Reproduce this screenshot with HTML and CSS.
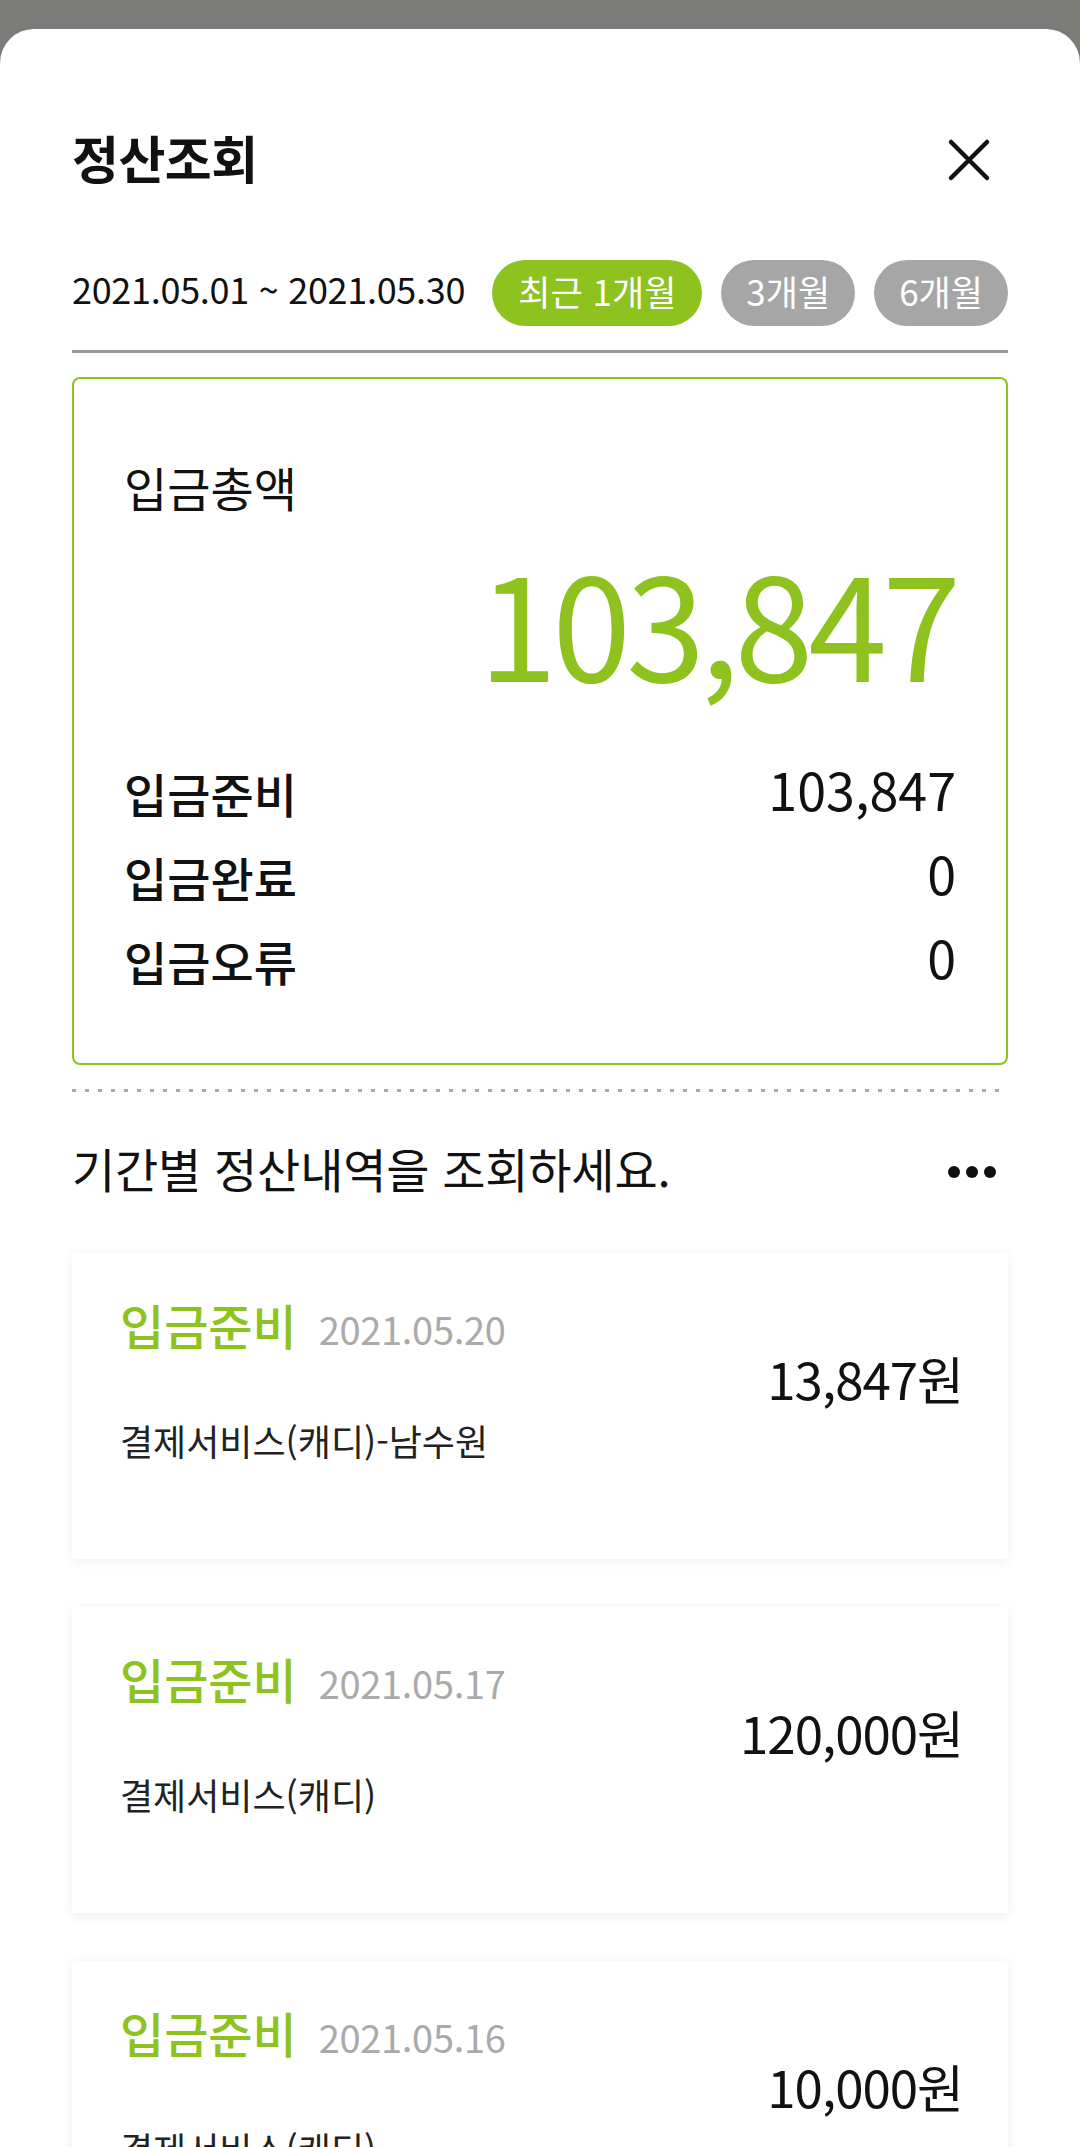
FILE: index.html
```html
<!DOCTYPE html>
<html lang="ko">
<head>
<meta charset="utf-8">
<title>정산조회</title>
<link rel="stylesheet" href="styles.css">
</head>
<body>
<div class="sheet">
  <header class="header">
    <h1 class="title">정산조회</h1>
    <svg class="close" width="44" height="44" viewBox="0 0 44 44" aria-label="닫기">
      <path d="M4 4 L40 40 M40 4 L4 40" stroke="#111" stroke-width="4.5" stroke-linecap="round" fill="none"/>
    </svg>
  </header>

  <div class="period">
    <span class="period-date">2021.05.01 ~ 2021.05.30</span>
    <div class="pills">
      <span class="pill pill-active">최근 1개월</span>
      <span class="pill">3개월</span>
      <span class="pill">6개월</span>
    </div>
  </div>
  <div class="rule"></div>

  <section class="summary">
    <div class="summary-label">입금총액</div>
    <div class="summary-total">103,847</div>
    <div class="summary-rows">
      <div class="summary-row"><span class="row-label">입금준비</span><span class="row-value">103,847</span></div>
      <div class="summary-row"><span class="row-label">입금완료</span><span class="row-value">0</span></div>
      <div class="summary-row"><span class="row-label">입금오류</span><span class="row-value">0</span></div>
    </div>
  </section>

  <div class="dotted"></div>

  <div class="list-head">
    <span class="list-title">기간별 정산내역을 조회하세요.</span>
    <svg class="more" width="48" height="12" viewBox="0 0 48 12" aria-label="더보기">
      <circle cx="6" cy="6" r="6" fill="#111"/>
      <circle cx="24" cy="6" r="6" fill="#111"/>
      <circle cx="42" cy="6" r="6" fill="#111"/>
    </svg>
  </div>

  <div class="cards">
    <article class="card">
      <div class="card-main">
        <div class="card-top"><span class="card-status">입금준비</span><span class="card-date">2021.05.20</span></div>
        <div class="card-desc">결제서비스(캐디)-남수원</div>
      </div>
      <div class="card-amount">13,847원</div>
    </article>
    <article class="card">
      <div class="card-main">
        <div class="card-top"><span class="card-status">입금준비</span><span class="card-date">2021.05.17</span></div>
        <div class="card-desc">결제서비스(캐디)</div>
      </div>
      <div class="card-amount">120,000원</div>
    </article>
    <article class="card">
      <div class="card-main">
        <div class="card-top"><span class="card-status">입금준비</span><span class="card-date">2021.05.16</span></div>
        <div class="card-desc">결제서비스(캐디)</div>
      </div>
      <div class="card-amount">10,000원</div>
    </article>
  </div>
</div>
</body>
</html>
```
FILE: styles.css
```css
* { box-sizing: border-box; }

html, body {
  margin: 0;
  padding: 0;
}

body {
  background: #7b7b79;
  font-family: "Noto Sans CJK KR", "Noto Sans", sans-serif;
  color: #111;
  overflow: hidden;
}

.sheet {
  margin-top: 29px;
  background: #fff;
  border-radius: 34px 34px 0 0;
  padding: 96px 72px 40px;
  min-height: 2118px;
}

.header {
  display: flex;
  align-items: center;
  justify-content: space-between;
  height: 64px;
}

.title {
  margin: 0;
  font-size: 51px;
  line-height: 64px;
  font-weight: 700;
  letter-spacing: -0.5px;
}

.close {
  margin-top: 6px;
  margin-right: 17px;
}

.period {
  display: flex;
  align-items: center;
  margin-top: 71px;
  height: 66px;
}

.period-date {
  font-size: 36px;
  line-height: 50px;
  letter-spacing: -0.3px;
  margin-bottom: 10px;
  color: #111;
}

.pills {
  display: flex;
  gap: 19px;
  margin-left: auto;
}

.pill {
  height: 66px;
  padding: 0 25px 4px;
  border-radius: 33px;
  background: #a6a6a6;
  color: #fff;
  font-size: 35px;
  line-height: 62px;
  white-space: nowrap;
}

.pill-active {
  background: #8dc21f;
  padding: 0 26px 4px;
}

.rule {
  margin-top: 24px;
  height: 3px;
  background: #9a9a9a;
}

.summary {
  margin-top: 24px;
  border: 2px solid #8dc21f;
  border-radius: 8px;
  padding: 80px 50px 60px;
}

.summary-label {
  font-size: 47px;
  line-height: 56px;
  color: #111;
}

.summary-total {
  margin-top: 45px;
  text-align: right;
  font-size: 142px;
  line-height: 120px;
  letter-spacing: -5px;
  color: #8dc21f;
}

.summary-rows {
  margin-top: 71px;
}

.summary-row {
  display: flex;
  justify-content: space-between;
  align-items: center;
  height: 84px;
}

.row-label {
  font-size: 47px;
  line-height: 84px;
  font-weight: 500;
}

.row-value {
  font-size: 52px;
  line-height: 84px;
  margin-bottom: 8px;
}

.dotted {
  margin-top: 24px;
  height: 3px;
  background-image: linear-gradient(to right, #a8a8a8 4px, transparent 4px);
  background-size: 13px 3px;
  background-repeat: repeat-x;
}

.list-head {
  display: flex;
  align-items: center;
  justify-content: space-between;
  margin-top: 46px;
  height: 60px;
}

.list-title {
  font-size: 47px;
  line-height: 60px;
  letter-spacing: -0.2px;
}

.more {
  margin-top: 8px;
  margin-right: 12px;
}

.cards {
  margin-top: 55px;
  display: flex;
  flex-direction: column;
  gap: 48px;
}

.card {
  display: flex;
  align-items: center;
  justify-content: space-between;
  height: 306px;
  padding: 41px 45px 97px 48px;
  background: #fff;
  box-shadow: 0 2px 12px rgba(0, 0, 0, 0.07);
}

.card-top {
  display: flex;
  align-items: baseline;
  height: 60px;
}

.card-status {
  font-size: 48px;
  line-height: 60px;
  font-weight: 500;
  color: #8dc21f;
}

.card-date {
  margin-left: 22px;
  font-size: 38px;
  line-height: 60px;
  color: #aaaaaa;
  letter-spacing: -0.3px;
}

.card-desc {
  margin-top: 64px;
  font-size: 36px;
  line-height: 44px;
  color: #222;
}

.card-amount {
  font-size: 51px;
  line-height: 64px;
  letter-spacing: -1px;
  color: #111;
}
```
